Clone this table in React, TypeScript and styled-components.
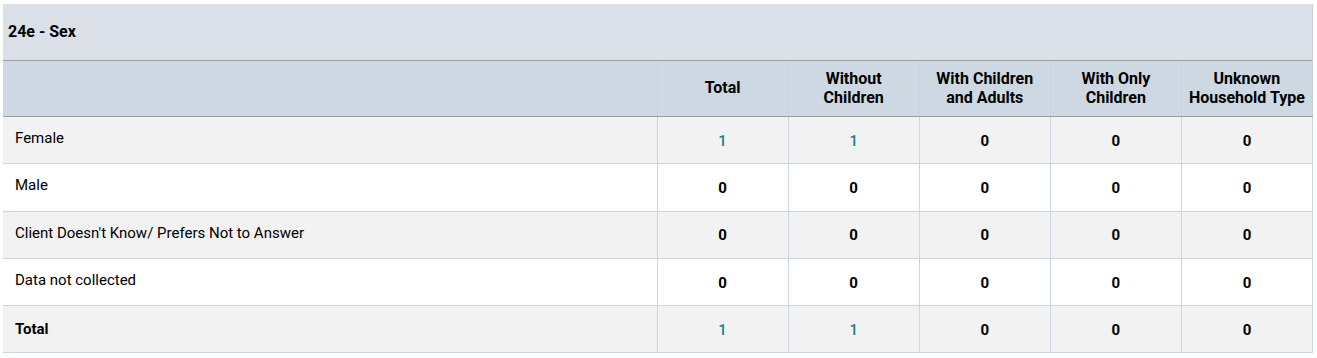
import React from 'react';
import styled, {createGlobalStyle} from 'styled-components';

const GlobalStyle = createGlobalStyle`
  body {
    margin: 0;
    background: #ffffff;
    font-family: Roboto, "Liberation Sans", sans-serif;
  }
`;

const Page = styled.div`
  padding: 4px 4px 0 3px;
`;

const Panel = styled.div`
  width: 1310px;
  display: flex;
  flex-direction: column;
`;

const TitleBar = styled.div`
  height: 54px;
  display: flex;
  align-items: center;
  padding: 0 0 2px 5px;
  background-color: #dbe0e8;
  border-right: 1px solid #c8d3de;
  border-bottom: 1px solid #9e9e9e;
  font-size: 16px;
  font-weight: 700;
  color: #000;
`;

const Table = styled.table`
  width: 100%;
  border-collapse: collapse;
  table-layout: fixed;
  font-size: 15px;
  color: #000;

  col.label {
    width: 654px;
  }
`;

const HeadCell = styled.th`
  height: 53px;
  padding: 0 2px 2px 2px;
  background-color: #cdd8e2;
  border-bottom: 1px solid #9e9e9e;
  border-left: 1px solid #c8d3de;
  border-right: 1px solid #c8d3de;
  font-size: 16px;
  font-weight: 700;
  line-height: 19px;
  text-align: center;
  vertical-align: middle;

  &:first-child {
    border-left: none;
  }
`;

const Row = styled.tr<{$striped: boolean}>`
  background-color: ${p => (p.$striped ? '#f2f2f2' : '#ffffff')};
`;

const LabelCell = styled.td<{$bold?: boolean}>`
  height: 42.3px;
  padding: ${p => (p.$bold ? '2px 12px 2px 12px' : '0 12px 4px 12px')};
  border-bottom: 1px solid #c8d6e2;
  font-weight: ${p => (p.$bold ? 700 : 400)};
  vertical-align: middle;
`;

const ValueCell = styled.td<{$link: boolean}>`
  padding: 1px 0 0 0;
  text-align: center;
  vertical-align: middle;
  border: 1px solid #c8d6e2;
  border-top: none;
  font-weight: ${p => (p.$link ? 500 : 700)};
  color: ${p => (p.$link ? '#1f7f87' : '#000000')};
`;

const columns = ['Total', 'Without Children', 'With Children and Adults', 'With Only Children', 'Unknown Household Type'];

const headerLines: string[][] = [
  ['Total'],
  ['Without', 'Children'],
  ['With Children', 'and Adults'],
  ['With Only', 'Children'],
  ['Unknown', 'Household Type'],
];

const rows = [
  {label: 'Female', values: [1, 1, 0, 0, 0]},
  {label: 'Male', values: [0, 0, 0, 0, 0]},
  {label: "Client Doesn't Know/ Prefers Not to Answer", values: [0, 0, 0, 0, 0]},
  {label: 'Data not collected', values: [0, 0, 0, 0, 0]},
  {label: 'Total', values: [1, 1, 0, 0, 0], total: true},
];

export default function App() {
  return (
    <Page>
      <GlobalStyle/>
      <Panel>
        <TitleBar>24e - Sex</TitleBar>
        <Table>
          <colgroup>
            <col className="label"/>
            {columns.map(c => <col key={c}/>)}
          </colgroup>
          <thead>
            <tr>
              <HeadCell/>
              {headerLines.map((lines, i) => (
                <HeadCell key={columns[i]}>
                  {lines.map((l, j) => <div key={j}>{l}</div>)}
                </HeadCell>
              ))}
            </tr>
          </thead>
          <tbody>
            {rows.map((r, i) => (
              <Row key={r.label} $striped={i % 2 === 0}>
                <LabelCell $bold={r.total}>{r.label}</LabelCell>
                {r.values.map((v, j) => (
                  <ValueCell key={j} $link={v > 0}>{v}</ValueCell>
                ))}
              </Row>
            ))}
          </tbody>
        </Table>
      </Panel>
    </Page>
  );
}
